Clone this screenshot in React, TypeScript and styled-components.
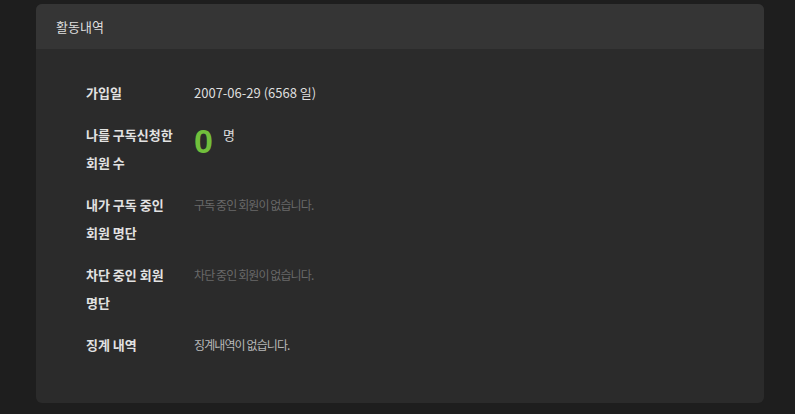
import React from "react";
import styled, { createGlobalStyle } from "styled-components";

const GlobalStyle = createGlobalStyle`
  html, body {
    margin: 0;
    padding: 0;
    background: #1e1e1e;
  }
  body {
    font-family: "Noto Sans CJK KR", "Noto Sans", sans-serif;
  }
`;

const Page = styled.div`
  width: 795px;
  height: 414px;
  padding: 4px 31px 0 36px;
  box-sizing: border-box;
`;

const Card = styled.section`
  background: #2b2b2b;
  border-radius: 6px;
  overflow: hidden;
  height: 399px;
`;

const CardHeader = styled.header`
  height: 45px;
  background: #353535;
  display: flex;
  align-items: center;
  padding-left: 20px;
  font-size: 13px;
  color: #dedede;
`;

const CardBody = styled.div`
  padding: 30px 50px;
  display: flex;
  flex-direction: column;
  gap: 14px;
`;

const Row = styled.div`
  display: grid;
  grid-template-columns: 96px 1fr;
  column-gap: 12px;
  align-items: start;
`;

const Label = styled.div`
  font-size: 13px;
  font-weight: 700;
  line-height: 28px;
  color: #e2e2e2;
  word-break: keep-all;
`;

const Value = styled.div<{ $tone?: "normal" | "muted" | "dim" }>`
  font-size: ${(p) => (p.$tone === "normal" ? "13px" : "12px")};
  line-height: 28px;
  letter-spacing: ${(p) => (p.$tone === "normal" ? "0" : "-0.9px")};
  color: ${(p) =>
    p.$tone === "muted" ? "#696969" : p.$tone === "dim" ? "#b8b8b8" : "#dedede"};
`;

const CountWrap = styled.div`
  display: flex;
  align-items: flex-start;
  gap: 10px;
`;

const Count = styled.span`
  font-family: "Liberation Sans", Arial, sans-serif;
  font-size: 34px;
  font-weight: 700;
  line-height: 34px;
  color: #71bf3c;
  margin-top: 3px;
`;

const Unit = styled.span`
  font-size: 13px;
  line-height: 28px;
  color: #dedede;
`;

const rows: { label: string; value: string; tone: "normal" | "muted" | "dim" }[] = [
  { label: "내가 구독 중인 회원 명단", value: "구독 중인 회원이 없습니다.", tone: "muted" },
  { label: "차단 중인 회원 명단", value: "차단 중인 회원이 없습니다.", tone: "muted" },
  { label: "징계 내역", value: "징계내역이 없습니다.", tone: "dim" },
];

export default function App() {
  return (
    <>
      <GlobalStyle />
      <Page>
        <Card>
          <CardHeader>활동내역</CardHeader>
          <CardBody>
            <Row>
              <Label>가입일</Label>
              <Value $tone="normal">2007-06-29 (6568 일)</Value>
            </Row>
            <Row>
              <Label>나를 구독신청한 회원 수</Label>
              <CountWrap>
                <Count>0</Count>
                <Unit>명</Unit>
              </CountWrap>
            </Row>
            {rows.map((r) => (
              <Row key={r.label}>
                <Label>{r.label}</Label>
                <Value $tone={r.tone}>{r.value}</Value>
              </Row>
            ))}
          </CardBody>
        </Card>
      </Page>
    </>
  );
}
